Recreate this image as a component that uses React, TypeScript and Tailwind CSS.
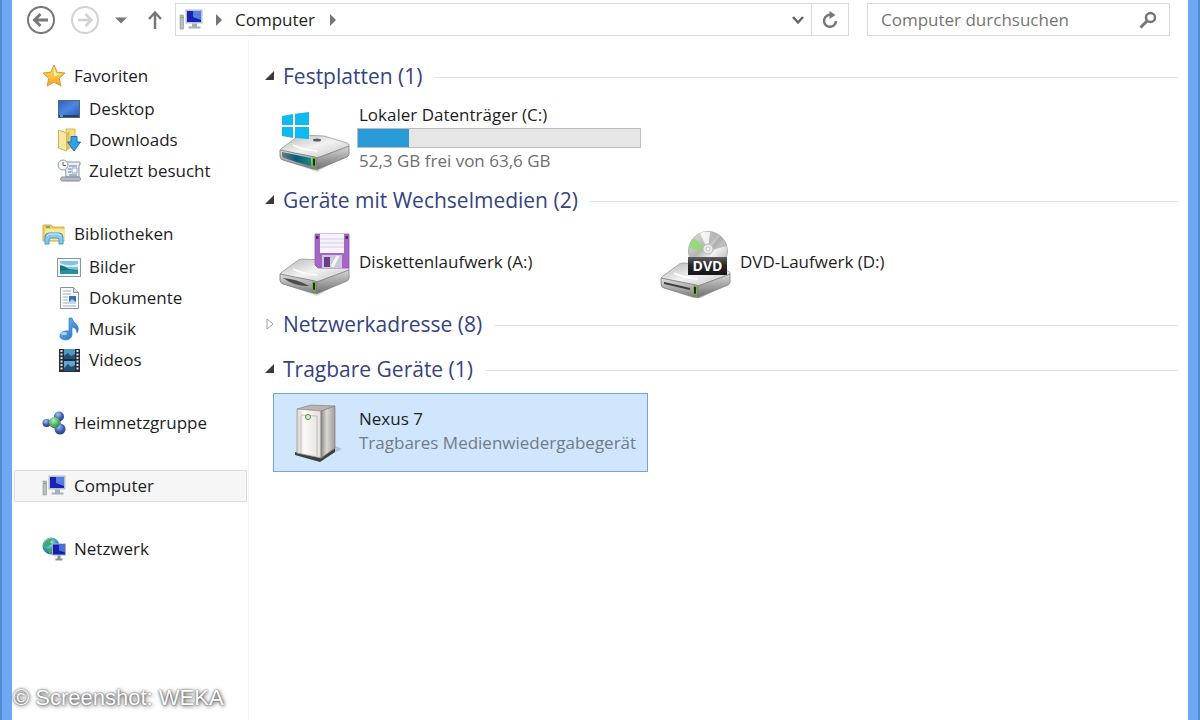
import type { ReactNode } from 'react';

const small = 'w-6 h-6 shrink-0';
const big = 'w-[72px] h-[68px] shrink-0';

/* Small icons (navigation pane) */

function StarIcon() {
  return (
    <svg viewBox="0 0 24 24" className={small}>
      <defs>
        <linearGradient id="star" x1="0" y1="0" x2="0" y2="1">
          <stop offset="0" stopColor="#ffe36b" />
          <stop offset="1" stopColor="#f5a21c" />
        </linearGradient>
      </defs>
      <path d="M12 1l3.2 7.2 7.8.8-5.8 5.3L18.900 22 12 18 5.100 22l1.700-7.700L1 9l7.800-.8z" fill="url(#star)" stroke="#d9953a" strokeLinejoin="round" />
      <path d="M12 4l2.200 5.500 5 .6-7.200 2.400z" fill="#fff2a8" />
    </svg>
  );
}

function DesktopIcon() {
  return (
    <svg viewBox="0 0 24 24" className={small}>
      <defs>
        <linearGradient id="desk" x1="0" y1="0" x2="1" y2="1">
          <stop offset="0" stopColor="#2f62c0" />
          <stop offset="0.500" stopColor="#4c86e2" />
          <stop offset="1" stopColor="#2b62c4" />
        </linearGradient>
      </defs>
      <rect x="1" y="3" width="22" height="18" fill="#54657f" />
      <rect x="2" y="4" width="20" height="14" fill="url(#desk)" />
      <rect x="2" y="18" width="20" height="2" fill="#2c405e" />
      <rect x="3" y="18" width="3" height="2" fill="#56a0c8" />
    </svg>
  );
}

function DownloadsIcon() {
  return (
    <svg viewBox="0 0 24 24" className={small}>
      <path d="M9 1h9v19H9z" fill="#f3e08c" stroke="#d6b754" />
      <path d="M1.500 2l8 3v18l-8-3z" fill="#f8e79f" stroke="#d3b257" />
      <path d="M9.500 5l3-2v18l-3 2z" fill="#e2bf55" />
      <path d="M14 8.500h6V14h3.500L17 23l-6.500-9H14z" fill="#36a0e4" stroke="#1d70b5" strokeLinejoin="round" />
    </svg>
  );
}

function RecentIcon() {
  return (
    <svg viewBox="0 0 24 24" className={small}>
      <path d="M8 3h15v3h-1v12H9z" fill="#e9f0f8" stroke="#8b98a8" />
      <path d="M5 18h17c2 0 2 4 0 4H6c-3 0-3-3-1-4z" fill="#b2bac6" stroke="#7f8997" />
      <path d="M12 7h8M11 10h3M11 13h3M12 16h8" stroke="#64799c" />
      <path d="M15 9h5v5h-5z" fill="#fff" stroke="#8ca2c3" />
      <circle cx="6" cy="6" r="5" fill="#f5f8fc" stroke="#98a1ad" />
      <path d="M6 3v3.500h3" fill="none" stroke="#55647a" />
    </svg>
  );
}

function LibraryIcon() {
  return (
    <svg viewBox="0 0 24 24" className={small}>
      <path d="M1 3h8l2 2h11v14H1z" fill="#f0cf68" stroke="#d6ac4c" />
      <path d="M3 7h20v11H3z" fill="#fbe69a" />
      <path d="M4 5h4" stroke="#5ab56a" strokeWidth="2" />
      <path d="M3 22v-7q0-4 4-4h10q4 0 4 4v7h-4v-4q0-2-2-2H9q-2 0-2 2v4z" fill="#84cbed" stroke="#4896c6" />
      <path d="M5 14q1-2 3-2h8q2 0 3 2" fill="none" stroke="#d5f2fd" />
    </svg>
  );
}

function PicturesIcon() {
  return (
    <svg viewBox="0 0 24 24" className={small}>
      <rect x=".5" y="3.500" width="23" height="18" fill="#f6fafd" stroke="#8297aa" />
      <rect x="3" y="6" width="18" height="13" fill="#7fc4e8" />
      <path d="M3 8q8 4 18 1v3H3z" fill="#d7eff7" />
      <path d="M3 10q5 1 9 4l9 1v4H3z" fill="#1d7278" />
      <path d="M3 16q9-2 18 0v3H3z" fill="#2a90a8" />
    </svg>
  );
}

function DocumentsIcon() {
  return (
    <svg viewBox="0 0 24 24" className={small}>
      <path d="M3.500 1.500h13l5 5v16h-18z" fill="#f8fafc" stroke="#8693a3" />
      <path d="M16.500 1.500v5h5" fill="#dce4ec" stroke="#8693a3" />
      <path d="M6 5h8M6 8h8M6 11h5M6 14h5M6 17h13M6 20h13" stroke="#9fb0c3" />
      <rect x="12" y="10" width="7" height="6" fill="#3c6eac" />
      <path d="M12 16l3-3 4 3z" fill="#9ed1f0" />
    </svg>
  );
}

function MusicIcon() {
  return (
    <svg viewBox="0 0 24 24" className={small}>
      <defs>
        <linearGradient id="note" x1="0" y1="0" x2="1" y2="1">
          <stop offset="0" stopColor="#7ec2f4" />
          <stop offset="1" stopColor="#1769c0" />
        </linearGradient>
      </defs>
      <path d="M12 1h3q1 4 4 6 4 4 1 9 0-5-5-6v8q-1 5-7 5-6-1-5-5 2-5 9-4z" fill="url(#note)" stroke="#3281cb" strokeWidth=".7" />
      <ellipse cx="7" cy="16.500" rx="3" ry="1.500" fill="#a6daf8" />
    </svg>
  );
}

function VideosIcon() {
  return (
    <svg viewBox="0 0 24 24" className={small}>
      <rect x="2" y="1" width="21" height="23" fill="#252e38" />
      <rect x="7" y="1" width="11" height="10" fill="#4f98c4" />
      <rect x="7" y="13" width="11" height="10" fill="#5ba6d2" />
      <path d="M7 8l4-3 3 3 4-2v5H7zM7 20l4-4 3 3 4-2v6H7z" fill="#25506f" />
      <path d="M4.500 2v21M20.500 2v21" stroke="#dfe7ed" strokeWidth="2" strokeDasharray="2 1.500" />
    </svg>
  );
}

function HomegroupIcon() {
  return (
    <svg viewBox="0 0 24 24" className={small}>
      <defs>
        <radialGradient id="ballBlue" cx=".4" cy=".3" r=".7">
          <stop offset="0" stopColor="#a9c6ee" />
          <stop offset="0.600" stopColor="#3d62b4" />
          <stop offset="1" stopColor="#26408a" />
        </radialGradient>
        <radialGradient id="ballGreen" cx=".4" cy=".3" r=".7">
          <stop offset="0" stopColor="#b2ecaa" />
          <stop offset="1" stopColor="#279047" />
        </radialGradient>
      </defs>
      <path d="M5 12l12-7 1 13z" fill="none" stroke="#7d9bd0" strokeWidth="3" />
      <circle cx="4.500" cy="12" r="4" fill="url(#ballBlue)" />
      <circle cx="17" cy="5.500" r="5" fill="url(#ballBlue)" />
      <circle cx="18" cy="18" r="5.500" fill="url(#ballBlue)" />
      <circle cx="12.500" cy="11.500" r="5.500" fill="url(#ballGreen)" />
    </svg>
  );
}

function ComputerIcon() {
  return (
    <svg viewBox="0 0 24 24" className={small}>
      <rect x="1" y="7" width="3.500" height="14" fill="#b9bec0" stroke="#8b9294" strokeWidth=".6" />
      <path d="M2 9.500h2" stroke="#65ac66" />
      <rect x="6.500" y="1.500" width="17" height="14" fill="#b3c1d6" />
      <rect x="8" y="3" width="14" height="11" fill="#1a22b4" />
      <path d="M14 3h8v9l-8-3z" fill="#577fe0" />
      <path d="M13 15.500h5v3h3.500v2H9.500v-2H13z" fill="#a6aeb6" />
    </svg>
  );
}

function NetworkIcon() {
  return (
    <svg viewBox="0 0 24 24" className={small}>
      <defs>
        <radialGradient id="globe" cx=".4" cy=".3" r=".8">
          <stop offset="0" stopColor="#c0f1f2" />
          <stop offset="0.500" stopColor="#379fb6" />
          <stop offset="1" stopColor="#145b88" />
        </radialGradient>
      </defs>
      <circle cx="9" cy="9" r="8.500" fill="url(#globe)" />
      <path d="M3 5q4-4 8-3l-3 3 2 2-5 3-3-1zM6 12l5 1-2 4q-3-1-3-5z" fill="#4aa65c" />
      <rect x="10" y="6.500" width="14" height="12" fill="#a0aec8" />
      <rect x="11" y="7.500" width="12" height="10" fill="#1720ae" />
      <path d="M17 7.500h6v8l-6-2z" fill="#496fda" />
      <path d="M15.500 18.500h3v3h2v2h-7v-2h2z" fill="#868f98" />
    </svg>
  );
}

/* Large icons (device tiles) */

function DriveGradients() {
  return (
    <svg width="0" height="0" className="absolute" aria-hidden="true">
      <defs>
        <linearGradient id="driveTop" x1="0" y1="0" x2="1" y2="1">
          <stop offset="0" stopColor="#b4b4b4" />
          <stop offset="0.500" stopColor="#f2f2f2" />
          <stop offset="1" stopColor="#c4c4c4" />
        </linearGradient>
        <linearGradient id="driveFront" x1="0" y1="0" x2="0" y2="1">
          <stop offset="0" stopColor="#dcdcdc" />
          <stop offset="1" stopColor="#7e7e7e" />
        </linearGradient>
        <linearGradient id="driveSide" x1="0" y1="0" x2="0" y2="1">
          <stop offset="0" stopColor="#d6d6d6" />
          <stop offset="1" stopColor="#6e6e6e" />
        </linearGradient>
        <linearGradient id="driveTeal" x1="0" y1="0" x2="1" y2="0">
          <stop offset="0" stopColor="#5f7c88" />
          <stop offset="0.500" stopColor="#0d5a78" />
          <stop offset="1" stopColor="#1c8a80" />
        </linearGradient>
      </defs>
    </svg>
  );
}

function DriveBody({ slot }: { slot: ReactNode }) {
  return (
    <>
      <path d="M5 54l34 12 33-19-2-5-62 4z" fill="#000" opacity=".15" />
      <path d="M4 42l15-11q2-2 5-2l22 1 23 7q4 2 1 4L42 51q-3 1-7 0L4 45q-3-1 0-3z" fill="url(#driveTop)" stroke="#999" strokeWidth=".8" />
      <path d="M2 44l35 7q2 0 2 3v7q0 3-4 2L5 54q-3-1-3-4z" fill="url(#driveFront)" stroke="#7a7a7a" strokeWidth=".8" />
      <path d="M39 52l32-12v8q0 2-2 3L38 64z" fill="url(#driveSide)" stroke="#808080" strokeWidth=".8" />
      <path d="M15 39q10 5 24 6" fill="none" stroke="#fff" strokeWidth="1.500" />
      {slot}
      <path d="M34.500 52l3 .5v8l-3-.7z" fill="#1d2c12" stroke="#72b83c" />
    </>
  );
}

function HardDiskIcon() {
  return (
    <svg viewBox="0 0 72 68" className={big}>
      <DriveBody slot={<path d="M4 46l29 6v8.500L6 52q-2-1-2-3z" fill="url(#driveTeal)" />} />
      <ellipse cx="39" cy="34" rx="4" ry="1.500" fill="#5a5a5a" />
      <path d="M4 10l11-2v11H4zM17 7.700L31 6v13H17zM4 21h11v11L4 30zM17 21h14v12l-14-1z" fill="#10b9ee" />
    </svg>
  );
}

function FloppyIcon() {
  return (
    <svg viewBox="0 0 72 68" className={big}>
      <DriveBody slot={<path d="M5 48q14 1 26 8-13 1-26-8z" fill="#4b4b4b" />} />
      <path d="M37 4h34v34H40l-3-3z" fill="#a566c6" stroke="#8f55ae" strokeWidth=".8" />
      <rect x="42" y="4" width="24" height="19" fill="#f6f4fa" />
      <path d="M42 9h24M42 13h24M42 17h24" stroke="#d3cde0" />
      <rect x="38" y="6" width="2.500" height="3" fill="#532a6d" />
      <rect x="67.500" y="6" width="2.500" height="3" fill="#532a6d" />
      <rect x="44" y="25" width="20" height="13" fill="#cfc8da" />
      <rect x="46" y="27" width="6" height="10" fill="#6b3f86" />
      <path d="M54 37l6-11" stroke="#f7f5fa" strokeWidth="3" />
    </svg>
  );
}

function DvdIcon() {
  return (
    <svg viewBox="0 0 72 68" className={big}>
      <defs>
        <linearGradient id="disc" x1="0" y1="0" x2="1" y2="1">
          <stop offset="0" stopColor="#e5e5e5" />
          <stop offset="0.400" stopColor="#b5b5b5" />
          <stop offset="0.600" stopColor="#f2f2f2" />
          <stop offset="1" stopColor="#a0a0a0" />
        </linearGradient>
        <linearGradient id="dvdLabel" x1="0" y1="0" x2="0" y2="1">
          <stop offset="0" stopColor="#5e5e5e" />
          <stop offset="0.500" stopColor="#242424" />
          <stop offset="1" stopColor="#161616" />
        </linearGradient>
      </defs>
      <g transform="translate(0 4)">
        <DriveBody slot={<path d="M5 48l26 6v2L5 50z" fill="#3d3d3d" />} />
      </g>
      <circle cx="49" cy="21" r="19.500" fill="url(#disc)" stroke="#a8a8a8" strokeWidth=".8" />
      <path d="M49 21L30 18q1-6 5-10z" fill="#8edb6b" opacity=".85" />
      <path d="M49 21L41 3q5-2 10-1z" fill="#fff" opacity=".8" />
      <path d="M49 21l12-15q5 4 7 10z" fill="#8c8c8c" opacity=".5" />
      <circle cx="49" cy="19" r="5" fill="#ececec" stroke="#b9b9b9" />
      <circle cx="49" cy="19" r="2" fill="#fff" stroke="#aaa" strokeWidth=".6" />
      <rect x="29" y="27" width="39" height="18" fill="url(#dvdLabel)" />
      <text x="48.500" y="41" textAnchor="middle" fill="#fff" fontFamily="Open Sans, sans-serif" fontWeight="700" fontSize="14">DVD</text>
    </svg>
  );
}

function MediaDeviceIcon() {
  return (
    <svg viewBox="0 0 72 68" className={big}>
      <defs>
        <linearGradient id="caseFront" x1="0" y1="0" x2="1" y2="0">
          <stop offset="0" stopColor="#d8d4d0" />
          <stop offset="0.300" stopColor="#fbfaf8" />
          <stop offset="1" stopColor="#e4e0dc" />
        </linearGradient>
        <linearGradient id="caseSide" x1="0" y1="0" x2="1" y2="0">
          <stop offset="0" stopColor="#8a8683" />
          <stop offset="0.400" stopColor="#dcd8d4" />
          <stop offset="1" stopColor="#a19c99" />
        </linearGradient>
      </defs>
      <path d="M52 56l12-6-7-3z" fill="#56708c" opacity=".3" />
      <path d="M17 53l26 5 14-9v4L42 63l-25-7z" fill="#3f3f40" />
      <path d="M19 10l14-4 24 1-14 5z" fill="#b9b4b0" stroke="#8f8b88" strokeWidth=".8" />
      <path d="M19 10l24 2v47l-24-5z" fill="url(#caseFront)" stroke="#9d9995" strokeWidth=".8" />
      <path d="M43 12l14-5v42l-14 10z" fill="url(#caseSide)" stroke="#8a8683" strokeWidth=".8" />
      <path d="M23 54V16l16 1v40" fill="none" stroke="#c2bdb9" />
      <circle cx="30" cy="18" r="2.500" fill="#dff2d3" stroke="#55883f" />
    </svg>
  );
}

/* Navigation pane */

type NavEntry = { label: string; icon: ReactNode };

const navGroups: { head: NavEntry; items: NavEntry[] }[] = [
  {
    head: { label: 'Favoriten', icon: <StarIcon /> },
    items: [
      { label: 'Desktop', icon: <DesktopIcon /> },
      { label: 'Downloads', icon: <DownloadsIcon /> },
      { label: 'Zuletzt besucht', icon: <RecentIcon /> },
    ],
  },
  {
    head: { label: 'Bibliotheken', icon: <LibraryIcon /> },
    items: [
      { label: 'Bilder', icon: <PicturesIcon /> },
      { label: 'Dokumente', icon: <DocumentsIcon /> },
      { label: 'Musik', icon: <MusicIcon /> },
      { label: 'Videos', icon: <VideosIcon /> },
    ],
  },
];

const places = [
  { label: 'Heimnetzgruppe', icon: <HomegroupIcon />, active: false },
  { label: 'Computer', icon: <ComputerIcon />, active: true },
  { label: 'Netzwerk', icon: <NetworkIcon />, active: false },
];

function NavPane() {
  return (
    <nav className="flex w-[237px] shrink-0 flex-col gap-8 border-r border-[#f3f3f3] pt-[21px] pl-0.5 pr-px">
      {navGroups.map((g) => (
        <div key={g.head.label}>
          <a href="#" className="flex h-8 items-center gap-2 pl-7">
            {g.head.icon}
            {g.head.label}
          </a>
          <ul className="pt-px">
            {g.items.map((item) => (
              <li key={item.label}>
                <a href="#" className="flex h-[31px] items-center gap-2 pl-[43px]">
                  {item.icon}
                  {item.label}
                </a>
              </li>
            ))}
          </ul>
        </div>
      ))}
      <ul className="flex flex-col gap-[31px]">
        {places.map((p) => (
          <li key={p.label}>
            <a
              href="#"
              className={`flex h-8 items-center gap-2 border pl-[27px] ${p.active ? 'border-[#dedede] bg-[#f6f6f6]' : 'border-transparent'}`}
            >
              {p.icon}
              {p.label}
            </a>
          </li>
        ))}
      </ul>
    </nav>
  );
}

/* Toolbar */

function Toolbar() {
  return (
    <header className="flex h-[39px] items-center pl-[14px] pr-[18px]">
      <button type="button" aria-label="Zurück" className="h-[30px] w-[30px]">
        <svg viewBox="0 0 30 30" fill="none" stroke="#787878">
          <circle cx="15" cy="15" r="13" strokeWidth="2" />
          <path d="M22 15H9M14.500 9L8.500 15l6 6" strokeWidth="3" />
        </svg>
      </button>
      <button type="button" aria-label="Vorwärts" className="ml-[14px] h-[30px] w-[30px]">
        <svg viewBox="0 0 30 30" fill="none" stroke="#d2d2d2">
          <circle cx="15" cy="15" r="13" strokeWidth="2" />
          <path d="M8 15h13M15.500 9l6 6-6 6" strokeWidth="2.500" />
        </svg>
      </button>
      <button type="button" aria-label="Zuletzt besuchte Orte" className="ml-[15px] h-5 w-3">
        <svg viewBox="0 0 12 20"><path d="M0 7.500h12l-6 6z" fill="#787878" /></svg>
      </button>
      <button type="button" aria-label="Nach oben" className="ml-5 h-5 w-4">
        <svg viewBox="0 0 16 20" fill="none" stroke="#787878" strokeWidth="2.500"><path d="M8 19V3M2 9l6-6.500L14 9" /></svg>
      </button>
      <div className="ml-3 flex h-[33px] flex-1 items-center border border-[#d9d9d9] pl-[3px]">
        <ComputerIcon />
        <svg viewBox="0 0 8 12" className="ml-3 h-3 w-2"><path d="M1 0l6 6-6 6z" fill="#777" /></svg>
        <button type="button" className="ml-3">Computer</button>
        <svg viewBox="0 0 8 12" className="ml-[14px] h-3 w-2"><path d="M1 0l6 6-6 6z" fill="#777" /></svg>
        <button type="button" aria-label="Verlauf" className="ml-auto flex h-full w-7 items-center justify-center border-r border-[#d9d9d9]">
          <svg viewBox="0 0 12 10" className="h-[10px] w-3" fill="none" stroke="#666" strokeWidth="2.500"><path d="M1 2l5 5.500L11 2" /></svg>
        </button>
        <button type="button" aria-label="Aktualisieren" className="flex w-9 items-center justify-center">
          <svg viewBox="0 0 18 18" className="h-[18px] w-[18px]" fill="none" stroke="#777" strokeWidth="2.500">
            <path d="M11 4.200A6 6 0 1 0 15 10" />
            <path d="M8.500 0v8l6-4z" fill="#777" stroke="none" />
          </svg>
        </button>
      </div>
      <form className="ml-[18px] flex h-[33px] w-[303px] items-center border border-[#d9d9d9] pl-[13px] pr-3" onSubmit={(e) => e.preventDefault()}>
        <input
          type="search"
          aria-label="Computer durchsuchen"
          placeholder="Computer durchsuchen"
          className="min-w-0 flex-1 bg-transparent outline-none placeholder:text-[#757575]"
        />
        <button type="submit" aria-label="Suchen" className="h-[18px] w-[18px]">
          <svg viewBox="0 0 18 18" fill="none" stroke="#757575">
            <circle cx="11.500" cy="6.500" r="4.500" strokeWidth="2.500" />
            <path d="M8 10l-6.500 6.500" strokeWidth="3" />
          </svg>
        </button>
      </form>
    </header>
  );
}

/* Content pane */

function Section({ title, open = true, children }: { title: string; open?: boolean; children?: ReactNode }) {
  return (
    <section>
      <div className="flex h-[45px] items-center gap-3 pl-[13px]">
        <h2 className="shrink-0 pb-1 text-[21px] leading-7 text-[#35447f]">
          <button type="button" aria-expanded={open} className="flex items-center gap-2">
            <svg viewBox="0 0 12 12" className="h-3 w-3">
              {open ? (
                <path d="M11 1v9H2z" fill="#3a3a3a" />
              ) : (
                <path d="M4 1v10l6-5z" fill="#fff" stroke="#a0a0a0" />
              )}
            </svg>
            {title}
          </button>
        </h2>
        <div className="h-px flex-1 bg-[#e4e4e4]" />
      </div>
      {children && <div className="flex flex-wrap gap-[6px] pl-[23px]">{children}</div>}
    </section>
  );
}

function Tile({ icon, name, selected = false, children }: { icon: ReactNode; name: string; selected?: boolean; children?: ReactNode }) {
  return (
    <button
      type="button"
      className={`flex h-[79px] w-[375px] items-center gap-[7px] border pl-1 text-left ${selected ? 'border-[#74a5da] bg-[#cfe6fc]' : 'border-transparent'}`}
    >
      {icon}
      <span className="flex flex-col whitespace-nowrap pb-1">
        <span className="pl-0.5">{name}</span>
        {children}
      </span>
    </button>
  );
}

export default function App() {
  return (
    <div className="border-x-2 border-[#5288d3] font-['Open_Sans','Noto_Sans',sans-serif] text-[17px] leading-6 text-[#1e1e1e]">
      <div className="relative flex min-h-screen flex-col overflow-hidden border-x-10 border-[#6ea8f1] bg-white">
        <DriveGradients />
        <Toolbar />
        <div className="flex flex-1">
          <NavPane />
          <main className="min-w-0 flex-1 pt-4 pl-px pr-[10px]">
            <Section title="Festplatten (1)">
              <Tile icon={<HardDiskIcon />} name="Lokaler Datenträger (C:)">
                <span
                  role="progressbar"
                  aria-label="Belegter Speicherplatz"
                  aria-valuenow={18}
                  className="mt-px flex h-5 w-[284px] border border-[#bcbcbc] bg-[#e6e6e6]"
                >
                  <span className="w-[18%] bg-[#2a9bd9]" />
                </span>
                <span className="pt-px pl-0.5 text-[#6f6f6f]">52,3 GB frei von 63,6 GB</span>
              </Tile>
            </Section>
            <Section title="Geräte mit Wechselmedien (2)">
              <Tile icon={<FloppyIcon />} name="Diskettenlaufwerk (A:)" />
              <Tile icon={<DvdIcon />} name="DVD-Laufwerk (D:)" />
            </Section>
            <Section title="Netzwerkadresse (8)" open={false} />
            <Section title="Tragbare Geräte (1)">
              <Tile icon={<MediaDeviceIcon />} name="Nexus 7" selected>
                <span className="pl-0.5 text-[#727b86]">Tragbares Medienwiedergabegerät</span>
              </Tile>
            </Section>
          </main>
        </div>
        <p className="absolute bottom-2 left-px font-['Liberation_Sans',sans-serif] text-[22px] leading-7 text-white [text-shadow:0_0_2px_#444,1px_1px_4px_#444]">
          © Screenshot: WEKA
        </p>
      </div>
    </div>
  );
}
